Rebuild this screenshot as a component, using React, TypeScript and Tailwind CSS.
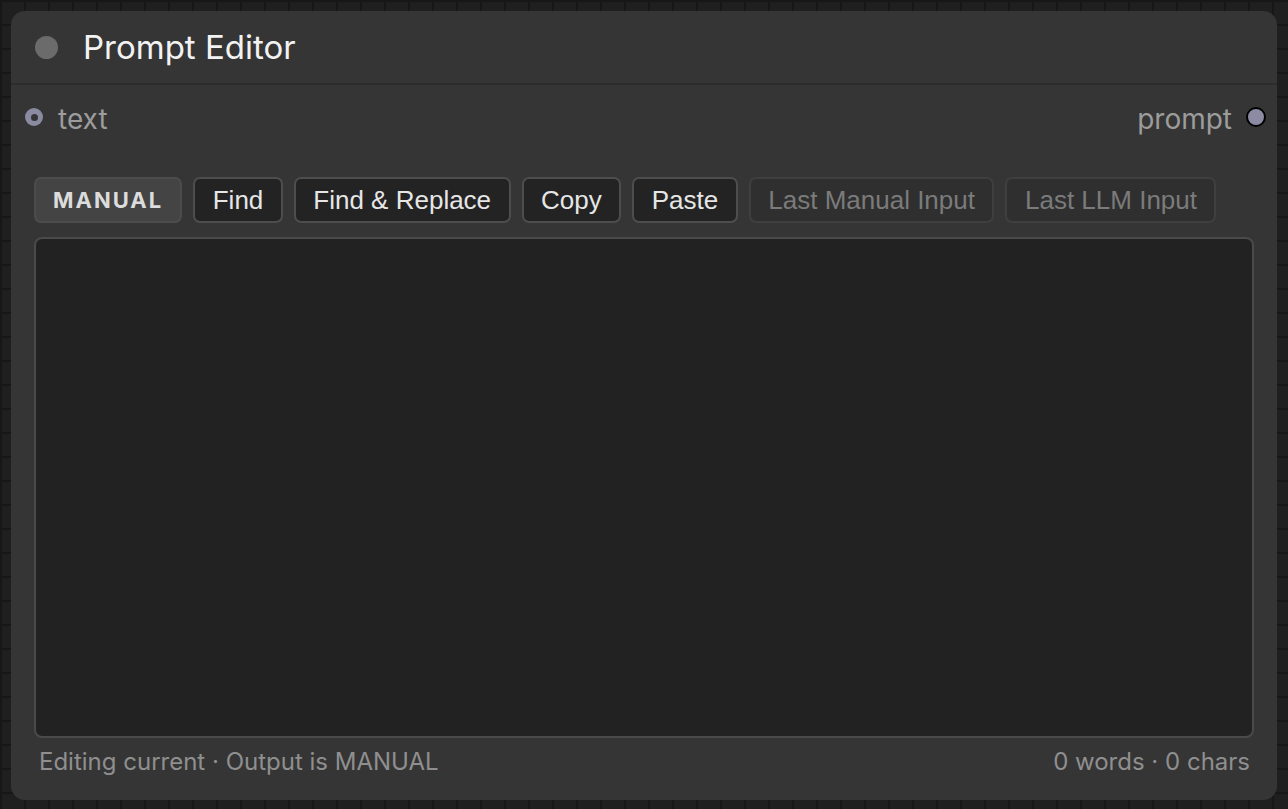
import React from 'react';

const tools = [
  { label: 'Find', muted: false },
  { label: 'Find & Replace', muted: false },
  { label: 'Copy', muted: false },
  { label: 'Paste', muted: false },
  { label: 'Last Manual Input', muted: true },
  { label: 'Last LLM Input', muted: true },
];

export default function App() {
  return (
    <div className="h-[809px] w-full overflow-hidden bg-[#1f1f1f] bg-[linear-gradient(#171717_2px,transparent_2px),linear-gradient(90deg,#171717_2px,transparent_2px)] bg-[size:24px_24px] px-[11px] pt-[11px] pb-[9px] font-['Inter',sans-serif]">
      <div className="flex h-full flex-col rounded-[14px] bg-[#353535] pb-[14px]">
        {/* Header */}
        <div className="flex h-[74px] shrink-0 items-center gap-[25px] border-b-2 border-[#2c2c2c] pl-[24px]">
          <span className="h-[23px] w-[23px] rounded-full bg-[#6b6b6b]" />
          <h1 className="text-[33px] leading-none text-[#f2f2f2]">Prompt Editor</h1>
        </div>

        {/* Slots */}
        <div className="flex h-[64px] shrink-0 items-center justify-between pl-[14px] pr-[11px]">
          <div className="flex items-center gap-[15px]">
            <span className="flex h-[18px] w-[18px] items-center justify-center rounded-full bg-[#8a8aa0]">
              <span className="h-[7px] w-[7px] rounded-full bg-[#353535]" />
            </span>
            <span className="pt-[3px] text-[28px] leading-none text-[#9c9c9c]">text</span>
          </div>
          <div className="flex items-center gap-[14px]">
            <span className="pt-[3px] text-[28px] leading-none text-[#9c9c9c]">prompt</span>
            <span className="h-[20px] w-[20px] rounded-full border-2 border-black bg-[#8b8ba3]" />
          </div>
        </div>

        {/* Toolbar */}
        <div className="mt-[28px] flex shrink-0 gap-[11px] px-[23px] font-['Liberation_Sans',Arial,sans-serif]">
          <button className="h-[46px] rounded-[7px] border-2 border-[#4c4c4c] bg-[#444444] px-[17px] text-[22px] font-bold tracking-[2px] text-[#dcdcdc] font-['Inter',sans-serif]">
            MANUAL
          </button>
          {tools.map(t => (
            <button
              key={t.label}
              className={
                t.muted
                  ? 'h-[46px] rounded-[7px] border-2 border-[#3f3f3f] bg-[#2f2f2f] px-[17.5px] text-[26px] text-[#7b7b7b]'
                  : 'h-[46px] rounded-[7px] border-2 border-[#4d4d4d] bg-[#232323] px-[17.5px] text-[26px] text-[#e6e6e6]'
              }
            >
              {t.label}
            </button>
          ))}
        </div>

        {/* Editor */}
        <div className="mx-[23px] mt-[14px] flex-1 rounded-[8px] border-2 border-[#4a4a4a] bg-[#222222] pr-[1px]">
          <textarea className="h-full w-full resize-none bg-transparent outline-none" />
        </div>

        {/* Footer */}
        <div className="flex h-[48px] shrink-0 items-center justify-between pl-[28px] pr-[27px] text-[24px] text-[#8f8f8f]">
          <span>Editing current · Output is MANUAL</span>
          <span>0 words · 0 chars</span>
        </div>
      </div>
    </div>
  );
}
